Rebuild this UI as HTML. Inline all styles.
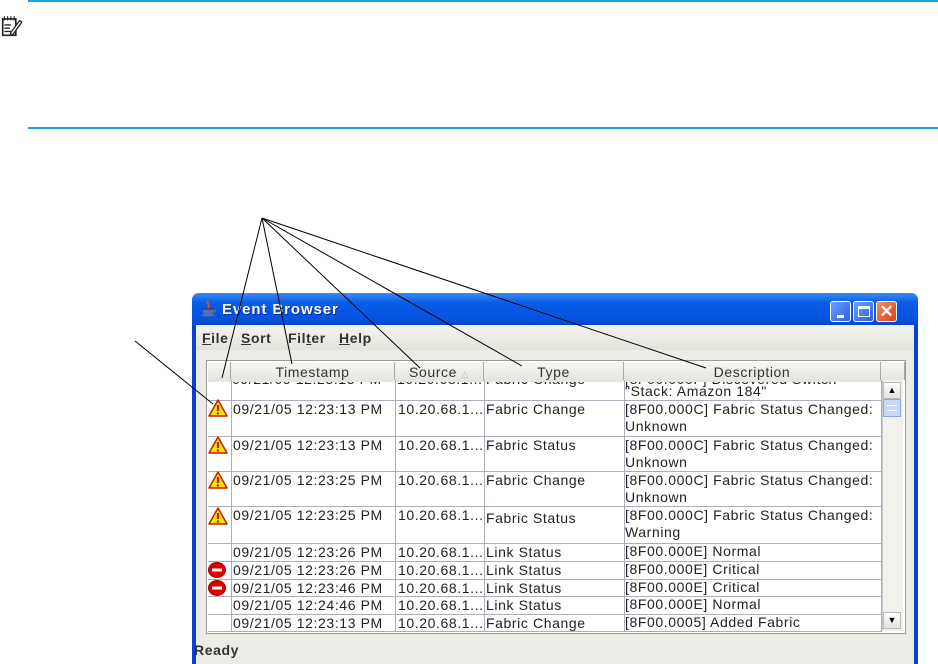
<!DOCTYPE html>
<html><head><meta charset="utf-8"><style>
*{margin:0;padding:0;box-sizing:border-box}
body{width:938px;height:664px;background:#fff;position:relative;overflow:hidden;font-family:"Liberation Sans",sans-serif}
.a{position:absolute}
.t{position:absolute;font-size:14px;letter-spacing:0.6px;color:#222;white-space:nowrap;line-height:17px}
.h{position:absolute;top:362px;height:18px;background:linear-gradient(#f7f7f5,#e6e5df);border-right:1px solid #a8a8a8;font-size:14px;letter-spacing:0.6px;color:#333;text-align:center;line-height:20px}
.hl{position:absolute;height:1px;background:#aab0bb;left:208px;width:673px}
.vl{position:absolute;width:1px;background:#aab0bb;top:380px;height:252px}
</style></head><body>
<div class="a" style="left:28px;top:0;width:910px;height:2px;background:#1aa3e0"></div>
<div class="a" style="left:28px;top:127px;width:910px;height:2px;background:#1aa3e0"></div>
<svg class="a" style="left:1px;top:14px" width="22" height="24" viewBox="0 0 20 22"><rect x="1.5" y="4.5" width="12" height="15" fill="#fff" stroke="#222" stroke-width="1.5"/><path d="M3 2v4M6 2v4M9 2v4M12 2v4" stroke="#222"/><path d="M3 10h6M3 13h5M3 16h6" stroke="#222" stroke-width="1.3"/><path d="M9 17l8-11 2 1.5-8 11-2.5 1z" fill="#fff" stroke="#222" stroke-width="1.2"/></svg>

<div class="a" style="left:192px;top:293px;width:726px;height:371px;background:#0a3fd8;border-radius:7px 7px 0 0"></div>
<div class="a" style="left:192px;top:293px;width:726px;height:32px;background:linear-gradient(#3a8cf6,#0a5de8 30%,#0553e0 80%,#0847c8);border-radius:7px 7px 0 0"></div>
<div class="a" style="left:196px;top:325px;width:718px;height:339px;background:#ecebe6"></div>
<svg class="a" style="left:200px;top:300px" width="18" height="18" viewBox="0 0 18 18"><path d="M3 9h10v3c0 3-10 3-10 0z" fill="#5a6ea8"/><path d="M2 9h13" stroke="#334" /><path d="M8 1c-2 3 3 4 0 7" stroke="#e05010" stroke-width="2" fill="none"/><path d="M13 10h2v2h-2" stroke="#5a6ea8" fill="none"/><ellipse cx="8" cy="15" rx="7" ry="1.5" fill="#5a6ea8"/></svg>
<div class="t" style="left:222px;top:301px;color:#fff;font-weight:bold;font-size:15px;letter-spacing:0.9px;text-shadow:1px 1px #0a2a90">Event Browser</div>
<div class="a" style="left:830px;top:301px;width:21px;height:21px;border:1px solid #fff;border-radius:3px;background:linear-gradient(135deg,#6aa0ff,#2860e0)"><div class="a" style="left:6px;top:13px;width:7px;height:3px;background:#fff"></div></div>
<div class="a" style="left:853px;top:301px;width:21px;height:21px;border:1px solid #fff;border-radius:3px;background:linear-gradient(135deg,#6aa0ff,#2860e0)"><div class="a" style="left:4px;top:4px;width:12px;height:11px;border:1px solid #fff;border-top-width:3px"></div></div>
<div class="a" style="left:876px;top:301px;width:21px;height:21px;border:1px solid #fff;border-radius:3px;background:linear-gradient(135deg,#f0906a,#d8401a);color:#fff;font-size:17px;font-weight:bold;text-align:center;line-height:19px">✕</div>
<div class="a" style="left:196px;top:325px;width:718px;height:25px;background:linear-gradient(#f4f3ee,#e4e3dc)"></div>
<div class="t" style="left:202px;top:330px;font-weight:bold;color:#333"><u>F</u>ile</div>
<div class="t" style="left:241px;top:330px;font-weight:bold;color:#333"><u>S</u>ort</div>
<div class="t" style="left:288px;top:330px;font-weight:bold;color:#333">Fil<u>t</u>er</div>
<div class="t" style="left:339px;top:330px;font-weight:bold;color:#333"><u>H</u>elp</div>
<div class="a" style="left:206px;top:360px;width:700px;height:274px;border:1px solid #9a9a9a;background:#fff"></div>
<div class="h" style="left:208px;width:23px"></div>
<div class="h" style="left:231px;width:164px">Timestamp</div>
<div class="h" style="left:395px;width:89px">Source <span style="color:#bbb;font-size:9px">△</span></div>
<div class="h" style="left:484px;width:140px">Type</div>
<div class="h" style="left:624px;width:257px">Description</div>
<div class="h" style="left:881px;width:24px"></div>
<div class="a" style="left:208px;top:380px;width:673px;height:252px;overflow:hidden">
<div class="t" style="left:24px;top:-9px">09/21/05 12:23:13 PM</div>
<div class="t" style="left:189px;top:-9px">10.20.68.1...</div>
<div class="t" style="left:278px;top:-9px">Fabric Change</div>
<div class="t" style="left:417px;top:-9px">[8F00.000F] Discovered Switch</div>
</div>
<div class="a" style="left:208px;top:380px;width:673px;height:2px;background:#e6e5df"></div>
<div class="t" style="left:625px;top:383px">"Stack: Amazon 184"</div>

<div class="hl" style="top:400px"></div><div class="hl" style="top:436px"></div><div class="hl" style="top:471px"></div><div class="hl" style="top:506px"></div><div class="hl" style="top:543px"></div><div class="hl" style="top:561px"></div><div class="hl" style="top:579px"></div><div class="hl" style="top:596px"></div><div class="hl" style="top:614px"></div><div class="hl" style="top:631px"></div>
<div class="vl" style="left:231px"></div><div class="vl" style="left:395px"></div><div class="vl" style="left:484px"></div><div class="vl" style="left:624px"></div><div class="vl" style="left:881px"></div>

<div class="t" style="left:233px;top:401px">09/21/05 12:23:13 PM</div><div class="t" style="left:398px;top:401px">10.20.68.1...</div><div class="t" style="left:486px;top:401px">Fabric Change</div><div class="t" style="left:625px;top:401px">[8F00.000C] Fabric Status Changed:<br>Unknown</div>
<div class="t" style="left:233px;top:437px">09/21/05 12:23:13 PM</div><div class="t" style="left:398px;top:437px">10.20.68.1...</div><div class="t" style="left:486px;top:437px">Fabric Status</div><div class="t" style="left:625px;top:437px">[8F00.000C] Fabric Status Changed:<br>Unknown</div>
<div class="t" style="left:233px;top:472px">09/21/05 12:23:25 PM</div><div class="t" style="left:398px;top:472px">10.20.68.1...</div><div class="t" style="left:486px;top:472px">Fabric Change</div><div class="t" style="left:625px;top:472px">[8F00.000C] Fabric Status Changed:<br>Unknown</div>
<div class="t" style="left:233px;top:507px">09/21/05 12:23:25 PM</div><div class="t" style="left:398px;top:507px">10.20.68.1...</div><div class="t" style="left:486px;top:510px">Fabric Status</div><div class="t" style="left:625px;top:507px">[8F00.000C] Fabric Status Changed:<br>Warning</div>
<div class="t" style="left:233px;top:544px">09/21/05 12:23:26 PM</div><div class="t" style="left:398px;top:544px">10.20.68.1...</div><div class="t" style="left:486px;top:544px">Link Status</div><div class="t" style="left:625px;top:543px">[8F00.000E] Normal</div>
<div class="t" style="left:233px;top:562px">09/21/05 12:23:26 PM</div><div class="t" style="left:398px;top:562px">10.20.68.1...</div><div class="t" style="left:486px;top:562px">Link Status</div><div class="t" style="left:625px;top:561px">[8F00.000E] Critical</div>
<div class="t" style="left:233px;top:580px">09/21/05 12:23:46 PM</div><div class="t" style="left:398px;top:580px">10.20.68.1...</div><div class="t" style="left:486px;top:580px">Link Status</div><div class="t" style="left:625px;top:579px">[8F00.000E] Critical</div>
<div class="t" style="left:233px;top:597px">09/21/05 12:24:46 PM</div><div class="t" style="left:398px;top:597px">10.20.68.1...</div><div class="t" style="left:486px;top:597px">Link Status</div><div class="t" style="left:625px;top:596px">[8F00.000E] Normal</div>
<div class="t" style="left:233px;top:615px">09/21/05 12:23:13 PM</div><div class="t" style="left:398px;top:615px">10.20.68.1...</div><div class="t" style="left:486px;top:615px">Fabric Change</div><div class="t" style="left:625px;top:614px">[8F00.0005] Added Fabric</div>

<svg class="a" style="left:0;top:0" width="938" height="664">
<defs><g id="w"><path d="M10 1L19 17H1z" fill="#ffe000" stroke="#c02000" stroke-width="1.5" stroke-linejoin="round"/><path d="M10 6v6" stroke="#c02000" stroke-width="2.2"/><circle cx="10" cy="14.5" r="1.2" fill="#c02000"/></g>
<g id="e"><ellipse cx="9" cy="8" rx="8.5" ry="7.5" fill="#e00000" stroke="#900" /><rect x="4" y="6.5" width="10" height="3" fill="#fff"/></g></defs>
<use href="#w" x="208" y="399"/><use href="#w" x="208" y="436"/><use href="#w" x="208" y="471"/><use href="#w" x="208" y="507"/>
<use href="#e" x="208" y="562"/><use href="#e" x="208" y="580"/>
<g stroke="#000" stroke-width="1" fill="none">
<line x1="262" y1="218" x2="222" y2="378"/><line x1="262" y1="218" x2="292" y2="364"/><line x1="262" y1="218" x2="420" y2="368"/><line x1="262" y1="218" x2="522" y2="366"/><line x1="262" y1="218" x2="706" y2="368"/><line x1="135" y1="341" x2="213" y2="404"/>
</g>
</svg>
<div class="a" style="left:882px;top:380px;width:21px;height:251px;background:#f2f1ec;border-left:1px solid #c8c8c8"></div>
<div class="a" style="left:883px;top:382px;width:18px;height:17px;background:linear-gradient(#fff,#e2e1da);border:1px solid #bbb;font-size:9px;text-align:center;line-height:15px">▲</div>
<div class="a" style="left:883px;top:399px;width:18px;height:18px;background:#c8d8f8;border:1px solid #8aa8e0"><div class="a" style="left:3px;top:5px;width:10px;height:6px;border-top:1px solid #fff;border-bottom:1px solid #fff"></div></div>
<div class="a" style="left:883px;top:612px;width:18px;height:17px;background:linear-gradient(#fff,#e2e1da);border:1px solid #bbb;font-size:9px;text-align:center;line-height:15px">▼</div>
<div class="t" style="left:194px;top:642px;font-weight:bold;color:#333">Ready</div>
</body></html>
